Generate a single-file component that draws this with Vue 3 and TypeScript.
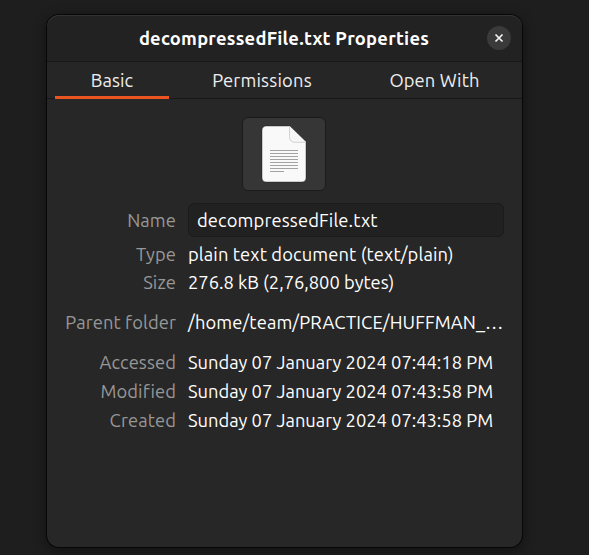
<script setup lang="ts">
import { ref } from 'vue'

interface Field {
  id: string
  label: string
  value: string
}

const fileName = 'decompressedFile.txt'
const tabs = [
  { id: 'basic', label: 'Basic' },
  { id: 'permissions', label: 'Permissions' },
  { id: 'open', label: 'Open With' },
]
const active = ref('basic')

const fields: Field[] = [
  { id: 'name', label: 'Name', value: fileName },
  { id: 'type', label: 'Type', value: 'plain text document (text/plain)' },
  { id: 'size', label: 'Size', value: '276.8 kB (2,76,800 bytes)' },
  { id: 'parent', label: 'Parent folder', value: '/home/team/PRACTICE/HUFFMAN_…' },
  { id: 'accessed', label: 'Accessed', value: 'Sunday 07 January 2024 07:44:18 PM' },
  { id: 'modified', label: 'Modified', value: 'Sunday 07 January 2024 07:43:58 PM' },
  { id: 'created', label: 'Created', value: 'Sunday 07 January 2024 07:43:58 PM' },
]
</script>

<template>
  <main class="desktop">
    <section class="dialog">
      <header class="titlebar">
        <h1>{{ fileName }} Properties</h1>
        <button class="close" aria-label="Close">
          <svg width="24" height="24" viewBox="0 0 24 24">
            <path d="M8.5 8.5l7 7M15.5 8.5l-7 7" stroke="#f4f4f4" stroke-width="1.7" />
          </svg>
        </button>
      </header>
      <nav class="tabs">
        <button
          v-for="tab in tabs"
          :key="tab.id"
          :class="['tab', tab.id, { active: active === tab.id }]"
          @click="active = tab.id"
        ><span>{{ tab.label }}</span></button>
      </nav>
      <div class="content">
        <button class="file-icon" aria-label="File icon">
          <svg width="46" height="58" viewBox="0 0 46 58">
            <path d="M5.5 1H28.5L45 17V52.5Q45 57 40.5 57H5.5Q1 57 1 52.5V5.5Q1 1 5.5 1Z" fill="#f9f9f9" stroke="#1f1f1f" stroke-opacity=".6" stroke-width=".7" />
            <path d="M28.5 1L45 17H34Q28.5 17 28.5 11.5Z" fill="#f6f6f6" />
            <path d="M28.5 1.5V11.5Q28.5 17.3 34 17.3H44.5" fill="none" stroke="#d2d2d2" stroke-width="1" />
            <path d="M9 25.5H37M9 28.5H37M9 31.5H37M9 34.5H37M9 37.5H37M9 40.5H37M9 43.5H37M9 46.5H23" stroke="#a3a3a3" stroke-width="1" />
          </svg>
        </button>
        <dl>
          <div v-for="field in fields" :key="field.id" :class="['row', field.id]">
            <dt><span>{{ field.label }}</span></dt>
            <dd><span>{{ field.value }}</span></dd>
          </div>
        </dl>
      </div>
    </section>
  </main>
</template>

<style>
body {
  margin: 0;
  background: #1e1e1e;
}
</style>

<style scoped>
* {
  box-sizing: border-box;
}
.desktop {
  height: 555px;
  padding: 15px 67px 0 47px;
  overflow: hidden;
  background: #1e1e1e;
  font: 18.33px/29px "Ubuntu", "Noto Sans", sans-serif;
  color: #fff;
  white-space: nowrap;
}
button {
  padding: 0;
  border: 0;
  font: inherit;
  color: inherit;
}
.dialog {
  height: 532px;
  border-radius: 12px;
  background: #272727;
  box-shadow: 0 0 0 1px #070707, 0 3px 12px 2px rgba(0, 0, 0, 0.38);
}
.titlebar {
  height: 47px;
  display: grid;
  grid-template-columns: 36px 1fr 36px;
  align-items: center;
  border-bottom: 1px solid #181818;
  border-radius: 12px 12px 0 0;
  background: #222;
  box-shadow: inset 0 1px #333;
}
h1 {
  grid-column: 2;
  margin: 0;
  padding-right: 1px;
  text-align: center;
  font-size: 18.33px;
  font-weight: 700;
  letter-spacing: 0.25px;
}
.close {
  width: 24px;
  height: 24px;
  margin-left: 1px;
  border-radius: 50%;
  background: #3a3a3a;
}
.close svg,
.file-icon svg {
  display: block;
}
.tabs {
  height: 37px;
  padding: 0 8px;
  display: grid;
  grid-template-columns: 114px 186px 159px;
  border-bottom: 1px solid #181818;
  background: #262626;
}
.tab {
  height: 37px;
  padding-top: 3px;
  background: none;
  color: #eee;
  letter-spacing: 0.1px;
  border-bottom: 3px solid transparent;
}
.tab.active {
  border-bottom-color: #e95420;
}
.tab.permissions {
  letter-spacing: 0.2px;
}
.content {
  padding-top: 18px;
}
.file-icon {
  width: 84px;
  height: 74px;
  margin-left: 195px;
  display: grid;
  place-items: center;
  border: 1px solid #1b1b1b;
  border-radius: 6px;
  background: #363636;
}
dl {
  margin: 12px 0 0;
}
.row {
  display: grid;
  grid-template-columns: 129px 316px;
  column-gap: 12px;
  height: 29px;
}
dt {
  text-align: right;
  color: #979797;
  letter-spacing: 0.1px;
}
dd {
  margin: 0;
  letter-spacing: -0.01px;
}
.row.name {
  height: 34px;
  line-height: 34px;
  margin-bottom: 3px;
}
.name dd {
  padding-left: 8px;
  line-height: 32px;
  letter-spacing: 0.14px;
  border: 1px solid #1b1b1b;
  border-radius: 6px;
  background: #212121;
}
.row.type {
  height: 28px;
}
.type dd,
.parent dd {
  letter-spacing: 0.12px;
}
.row.parent {
  margin-top: 11px;
  margin-bottom: 11px;
}
</style>
